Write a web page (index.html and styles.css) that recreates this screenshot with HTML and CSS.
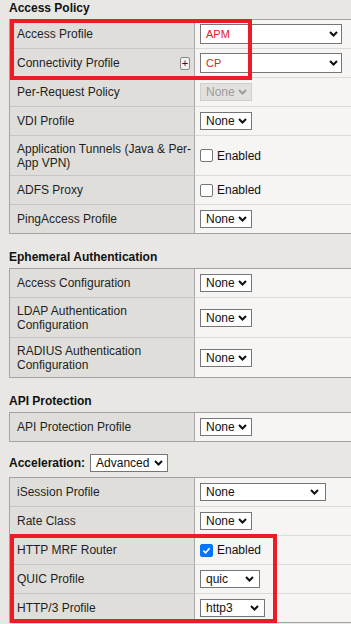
FILE: index.html
```html
<!DOCTYPE html>
<html>
<head>
<meta charset="utf-8">
<link rel="stylesheet" href="styles.css">
</head>
<body>
<div class="page">
  <section class="sec first">
    <div class="sec-title">Access Policy</div>
    <div class="tbl">
      <div class="row"><div class="lbl">Access Profile</div><div class="val"><span class="sel wide red">APM<svg class="chev" viewBox="0 0 9 6"><path d="M1 1l3.5 3.5L8 1"/></svg></span></div></div>
      <div class="row"><div class="lbl">Connectivity Profile<span class="plus">+</span></div><div class="val"><span class="sel wide red">CP<svg class="chev" viewBox="0 0 9 6"><path d="M1 1l3.5 3.5L8 1"/></svg></span></div></div>
      <div class="row"><div class="lbl">Per-Request Policy</div><div class="val"><span class="sel none disabled">None<svg class="chev" viewBox="0 0 9 6"><path d="M1 1l3.5 3.5L8 1"/></svg></span></div></div>
      <div class="row"><div class="lbl">VDI Profile</div><div class="val"><span class="sel none">None<svg class="chev" viewBox="0 0 9 6"><path d="M1 1l3.5 3.5L8 1"/></svg></span></div></div>
      <div class="row tall"><div class="lbl">Application Tunnels (Java &amp; Per-App VPN)</div><div class="val"><span class="cb"></span><span class="cbl">Enabled</span></div></div>
      <div class="row"><div class="lbl">ADFS Proxy</div><div class="val"><span class="cb"></span><span class="cbl">Enabled</span></div></div>
      <div class="row"><div class="lbl">PingAccess Profile</div><div class="val"><span class="sel none">None<svg class="chev" viewBox="0 0 9 6"><path d="M1 1l3.5 3.5L8 1"/></svg></span></div></div>
    </div>
  </section>

  <section class="sec">
    <div class="sec-title">Ephemeral Authentication</div>
    <div class="tbl">
      <div class="row"><div class="lbl">Access Configuration</div><div class="val"><span class="sel none">None<svg class="chev" viewBox="0 0 9 6"><path d="M1 1l3.5 3.5L8 1"/></svg></span></div></div>
      <div class="row tall"><div class="lbl">LDAP Authentication Configuration</div><div class="val"><span class="sel none">None<svg class="chev" viewBox="0 0 9 6"><path d="M1 1l3.5 3.5L8 1"/></svg></span></div></div>
      <div class="row tall"><div class="lbl">RADIUS Authentication Configuration</div><div class="val"><span class="sel none">None<svg class="chev" viewBox="0 0 9 6"><path d="M1 1l3.5 3.5L8 1"/></svg></span></div></div>
    </div>
  </section>

  <section class="sec">
    <div class="sec-title">API Protection</div>
    <div class="tbl">
      <div class="row"><div class="lbl">API Protection Profile</div><div class="val"><span class="sel none">None<svg class="chev" viewBox="0 0 9 6"><path d="M1 1l3.5 3.5L8 1"/></svg></span></div></div>
    </div>
  </section>

  <section class="sec accel">
    <div class="sec-title with-sel">Acceleration:<span class="sel adv">Advanced<svg class="chev" viewBox="0 0 9 6"><path d="M1 1l3.5 3.5L8 1"/></svg></span></div>
    <div class="tbl">
      <div class="row"><div class="lbl">iSession Profile</div><div class="val"><span class="sel isess">None<svg class="chev" viewBox="0 0 9 6"><path d="M1 1l3.5 3.5L8 1"/></svg></span></div></div>
      <div class="row"><div class="lbl">Rate Class</div><div class="val"><span class="sel none">None<svg class="chev" viewBox="0 0 9 6"><path d="M1 1l3.5 3.5L8 1"/></svg></span></div></div>
      <div class="row"><div class="lbl">HTTP MRF Router</div><div class="val"><span class="cb checked"><svg viewBox="0 0 13 13"><path d="M2.8 6.6l2.6 2.6 4.8-5.4"/></svg></span><span class="cbl">Enabled</span></div></div>
      <div class="row"><div class="lbl">QUIC Profile</div><div class="val"><span class="sel quic">quic<svg class="chev" viewBox="0 0 9 6"><path d="M1 1l3.5 3.5L8 1"/></svg></span></div></div>
      <div class="row"><div class="lbl">HTTP/3 Profile</div><div class="val"><span class="sel http3">http3<svg class="chev" viewBox="0 0 9 6"><path d="M1 1l3.5 3.5L8 1"/></svg></span></div></div>
    </div>
  </section>

  <div class="hl hl-top"></div>
  <div class="hl hl-bottom"></div>
</div>
</body>
</html>
```

FILE: styles.css
```css
html, body {
  margin: 0;
  padding: 0;
  overflow: hidden;
  background: #e8e7e4;
}
body {
  font-family: "Liberation Sans", Arial, sans-serif;
  font-size: 12px;
  color: #1c1c1c;
}
.page {
  position: relative;
  width: 420px;
  padding-left: 9px;
  box-sizing: border-box;
}
.sec {
  margin-top: 15px;
}
.sec.first {
  margin-top: 0;
}
.sec.accel {
  margin-top: 9px;
}
.sec-title {
  height: 19px;
  line-height: 17px;
  font-weight: bold;
  color: #111;
  box-sizing: border-box;
}
.sec-title.with-sel {
  height: 26px;
  display: flex;
  align-items: flex-end;
  line-height: 17px;
  padding-bottom: 5px;
}
.sel.adv {
  width: 78px;
  margin-left: 5px;
  font-weight: normal;
  font-size: 12px;
}
.tbl {
  border-top: 1px solid #a3a3a3;
  border-left: 1px solid #a3a3a3;
}
.row {
  display: flex;
  height: 29px;
}
.row.tall {
  height: 40px;
}
.lbl {
  width: 185px;
  flex: none;
  box-sizing: border-box;
  padding: 0 0 0 7px;
  display: flex;
  align-items: center;
  background: #dfdedb;
  border-right: 1px solid #a9a9a9;
  border-bottom: 1px solid #c6c6c4;
  line-height: 14px;
  color: #1e1e1e;
}
.row:last-child .lbl,
.row:last-child .val {
  border-bottom-color: #a3a3a3;
}
.val {
  flex: 1;
  display: flex;
  align-items: center;
  padding-left: 5px;
  background: #f6f5f3;
  border-bottom: 1px solid #dcdbd9;
}
.plus {
  margin-left: auto;
  margin-right: 4px;
  width: 10px;
  height: 13px;
  box-sizing: border-box;
  border: 1px solid #8a8a8a;
  border-radius: 2px;
  background: #f1f1f1;
  font-size: 11px;
  line-height: 10px;
  text-align: center;
  color: #3a0a4a;
  margin-top: 1px;
  flex: none;
}
.sel {
  display: inline-flex;
  align-items: center;
  justify-content: space-between;
  box-sizing: border-box;
  height: 18px;
  border: 1px solid #767676;
  background: #fff;
  padding: 0 4px 0 5px;
  font-size: 12px;
  color: #111;
  line-height: 16px;
}
.chev {
  width: 9px;
  height: 6px;
  flex: none;
}
.chev path {
  fill: none;
  stroke: #111;
  stroke-width: 2;
}
.sel.wide {
  width: 142px;
  height: 20px;
  padding-right: 3px;
}
.sel.red {
  color: #e3202b;
  font-size: 11px;
}
.sel.none {
  width: 52px;
}
.sel.disabled {
  background: #e2e1de;
  border-color: #cfcfcd;
  color: #9c9c9c;
}
.sel.disabled .chev path {
  stroke: #9c9c9c;
}
.sel.isess {
  width: 126px;
  padding-right: 6px;
}
.sel.quic {
  width: 60px;
  padding-right: 5px;
}
.sel.http3 {
  width: 65px;
  padding-right: 5px;
}
.cb {
  width: 13px;
  height: 13px;
  box-sizing: border-box;
  border: 1px solid #767676;
  border-radius: 2px;
  background: #fff;
  flex: none;
  display: inline-block;
}
.cb.checked {
  background: #0075ff;
  border-color: #0075ff;
}
.cb svg {
  display: block;
  width: 11px;
  height: 11px;
}
.cb svg path {
  fill: none;
  stroke: #fff;
  stroke-width: 2;
}
.cbl {
  margin-left: 4px;
  color: #111;
}
.hl {
  position: absolute;
  border: 4px solid #ec1c26;
  box-sizing: border-box;
}
.hl-top {
  left: 10px;
  top: 19px;
  width: 242px;
  height: 61px;
}
.hl-bottom {
  left: 10px;
  top: 534px;
  width: 267px;
  height: 89px;
}
```
